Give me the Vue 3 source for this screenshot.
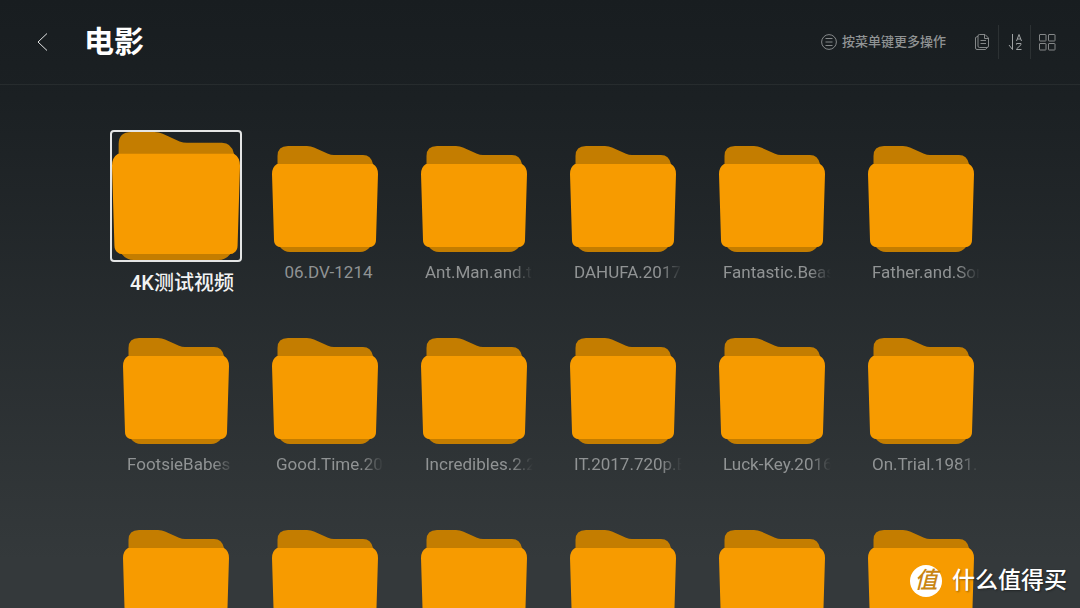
<script setup>
const folders = [
  { id: 1, name: '4K测试视频', selected: true },
  { id: 2, name: '06.DV-1214', short: true },
  { id: 3, name: 'Ant.Man.and.the' },
  { id: 4, name: 'DAHUFA.2017' },
  { id: 5, name: 'Fantastic.Beas' },
  { id: 6, name: 'Father.and.Son' },
  { id: 7, name: 'FootsieBabes' },
  { id: 8, name: 'Good.Time.20' },
  { id: 9, name: 'Incredibles.2.2' },
  { id: 10, name: 'IT.2017.720p.B' },
  { id: 11, name: 'Luck-Key.2016' },
  { id: 12, name: 'On.Trial.1981.' },
  { id: 13 },
  { id: 14 },
  { id: 15 },
  { id: 16 },
  { id: 17 },
  { id: 18 },
]
</script>

<template>
  <div class="screen">
    <header class="bar">
      <button class="icon-btn back" type="button" aria-label="返回">
        <svg width="12" height="20" viewBox="0 0 12 20"><path d="M11 1.500 L2 10 L11 18.500" /></svg>
      </button>
      <h1 class="title">电影</h1>
      <p class="hint">
        <svg width="16" height="16" viewBox="0 0 16 16">
          <circle cx="8" cy="8" r="7.400" />
          <path d="M4.500 4.500h7M4.500 8h7M4.500 11.500h7" />
        </svg>
        <span>按菜单键更多操作</span>
      </p>
      <nav class="tools">
        <button class="icon-btn tool" type="button" aria-label="复制">
          <svg width="16" height="18" viewBox="0 0 16 18">
            <path d="M5.500 1.500H11L14.500 5v8a1.500 1.500 0 0 1-1.500 1.500H5.500A1.500 1.500 0 0 1 4 13V3a1.500 1.500 0 0 1 1.500-1.500z" />
            <path d="M10.500 1.500V5.500h4M6.500 7.500h5.500M6.500 10.500h5.500M4 3.200L1.500 4.500v10.500a1.500 1.500 0 0 0 1.500 1.500h8.500l1.800-2" />
          </svg>
        </button>
        <button class="icon-btn tool" type="button" aria-label="排序">
          <svg class="sort" width="16" height="18" viewBox="0 0 16 18">
            <path d="M5.500 1v15.500L2 12M9.500 8L12 1.500L14.500 8M10.300 6h3.400M9.500 11.500V10.500h4.500v1.200L9.500 16v.500h5" />
          </svg>
        </button>
        <button class="icon-btn tool" type="button" aria-label="网格视图">
          <svg width="18" height="18" viewBox="0 0 18 18">
            <rect x="1.500" y="1.500" width="6.500" height="6.500" rx=".5" />
            <rect x="10.500" y="1.500" width="6.500" height="6.500" rx=".5" />
            <rect x="1.500" y="10.500" width="6.500" height="6.500" rx=".5" />
            <rect x="10.500" y="10.500" width="6.500" height="6.500" rx=".5" />
          </svg>
        </button>
      </nav>
    </header>

    <main class="grid">
      <button
        v-for="f in folders"
        :key="f.id"
        type="button"
        class="tile"
        :class="{ selected: f.selected, short: f.short }"
        :aria-label="f.name || '文件夹'"
      >
        <span class="frame">
          <svg class="folder" viewBox="0 0 106 106">
            <path fill="#c47d00" d="M5.500 20V10Q5.500 0 16 0H35Q39 0 42 1.500L56 7.800Q59 9 62 9H91Q99 9 101 18V98L98 101Q94 106 88 106H18Q12 106 8 101L5 98Z" />
            <path fill="#f79b00" d="M5 18H101Q106 21 106 28L104 94Q104 98 101 100Q100 101 98 101H8Q6 101 5 100Q2 98 2 94L0 28Q0 21 5 18Z" />
          </svg>
        </span>
        <span v-if="f.name" class="name">{{ f.name }}</span>
      </button>
    </main>

    <div class="mark">
      <span class="badge">值</span>
      <span>什么值得买</span>
    </div>
  </div>
</template>

<style>
body {
  margin: 0;
  background: #34393b;
}
</style>

<style scoped>
.screen {
  position: relative;
  height: 100vh;
  overflow: hidden;
  background: linear-gradient(#181d20 0%, #1b2023 16%, #34393b 92%, #34393b 100%);
  font-family: Roboto, "Noto Sans CJK SC", sans-serif;
  color: #909394;
}
button {
  padding: 0;
  border: 0;
  background: none;
  color: inherit;
  font: inherit;
}
.bar {
  display: flex;
  align-items: center;
  box-sizing: border-box;
  height: 85px;
  padding: 0 18px 0 36px;
  border-bottom: 1px solid #272c2e;
}
.bar svg {
  display: block;
  fill: none;
  stroke: #858889;
  stroke-width: 1;
}
.bar .sort {
  stroke: #a0a3a4;
}
.bar .back svg {
  stroke: #e4e5e5;
}
.title {
  margin: 0 auto 0 36px;
  color: #fff;
  font-size: 30px;
  line-height: 40px;
  font-weight: 700;
}
.hint {
  display: flex;
  align-items: center;
  gap: 5px;
  margin: 0 20px 0 0;
  font-size: 13px;
  line-height: 20px;
  font-weight: 500;
}
.tools {
  display: flex;
}
.tool {
  display: flex;
  align-items: center;
  justify-content: center;
  width: 32px;
  height: 34px;
}
.tool + .tool {
  border-left: 1px solid #2c3133;
}
.grid {
  display: grid;
  grid-template-columns: repeat(6, 1fr);
  grid-auto-rows: 192px;
  padding: 61px 85px 0 101px;
}
.tile {
  display: flex;
  flex-direction: column;
  align-items: center;
  min-width: 0;
}
.frame {
  box-sizing: border-box;
  width: 106px;
  height: 106px;
}
.folder {
  display: block;
  width: 100%;
  height: 100%;
}
.name {
  width: 108px;
  margin: 8px 0 0 11px;
  overflow: hidden;
  font-size: 17px;
  line-height: 24px;
  text-align: left;
  white-space: nowrap;
  mask-image: linear-gradient(to right, #000 80%, transparent 100%);
}
.short .name {
  margin-left: 8px;
  text-align: center;
  mask-image: none;
}
.selected .frame {
  flex: none;
  width: 132px;
  height: 132px;
  margin-top: -16px;
  border: 2px solid #e4e5e5;
  border-radius: 4px;
}
.selected .name {
  width: auto;
  margin: 7px 0 0 13px;
  color: #f2f3f3;
  font-size: 20px;
  line-height: 28px;
  font-weight: 500;
  mask-image: none;
}
.mark {
  position: absolute;
  right: 13px;
  bottom: 9px;
  display: flex;
  align-items: center;
  gap: 10px;
  color: #fff;
  font-size: 23px;
  line-height: 36px;
  font-weight: 500;
  text-shadow: 1px 1px 2px #0006;
}
.badge {
  width: 32px;
  height: 32px;
  border-radius: 50%;
  background: #fff;
  color: #c98512;
  font-size: 23px;
  line-height: 32px;
  font-style: italic;
  text-align: center;
  text-shadow: none;
}
</style>
